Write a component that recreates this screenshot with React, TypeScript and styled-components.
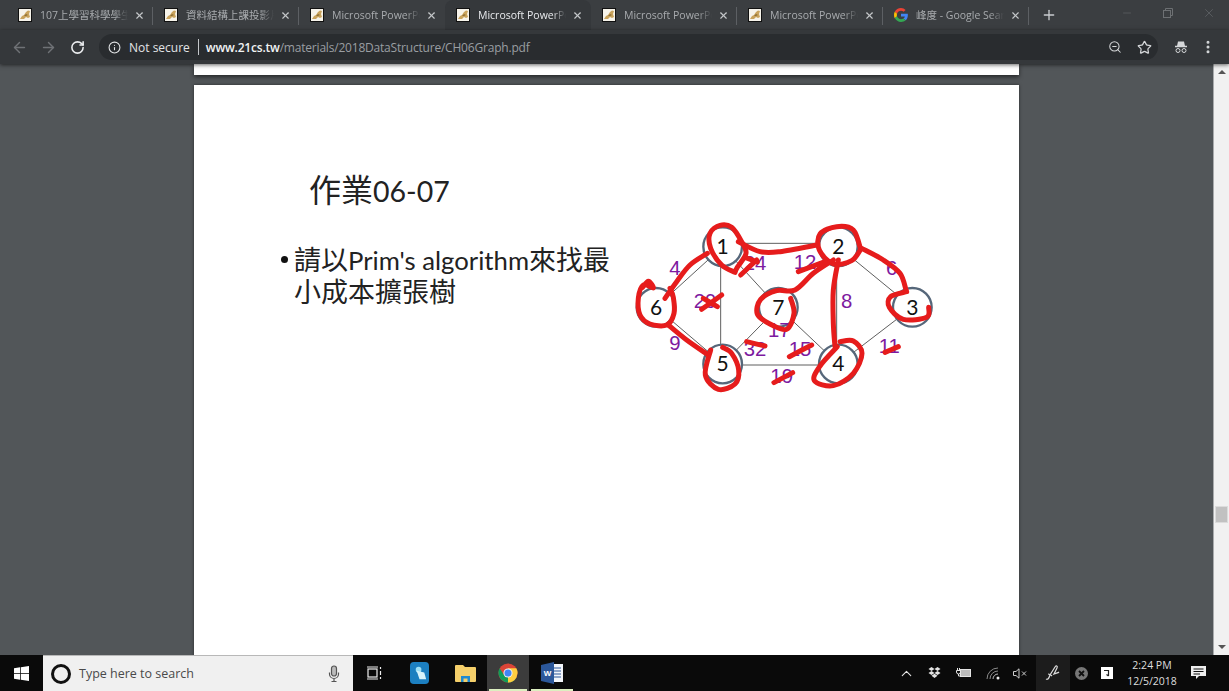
import * as React from "react";
import styled, { createGlobalStyle } from "styled-components";
import { ArrowLeft, ArrowRight, RotateCw, Info, ZoomOut, Star, MoreVertical, Minus, X, Plus, ChevronUp } from "lucide-react";

const uiFont = `"Open Sans", "Noto Sans", "Noto Sans CJK TC", sans-serif`;
const slideFont = `Lato, "Noto Sans CJK TC", sans-serif`;

const GlobalStyle = createGlobalStyle`
    html, body {
        margin: 0;
        padding: 0;
        background: #525659;
        overflow: hidden;
    }
`;

const Screen = styled.div`
    width: 1229px;
    height: 691px;
    display: flex;
    flex-direction: column;
    overflow: hidden;
    font-family: ${uiFont};
`;

/* ---- tab strip ---- */

const TabStrip = styled.div`
    height: 30px;
    flex: none;
    display: flex;
    align-items: stretch;
    padding-left: 7px;
    background: #3b3e41;
`;

const Tab = styled.div<{ $active?: boolean; $divider?: boolean }>`
    width: 146px;
    box-sizing: border-box;
    flex: none;
    display: flex;
    align-items: center;
    padding: 0 8px 0 11px;
    position: relative;
    border-radius: 8px 8px 0 0;
    background: ${(p) => (p.$active ? "#35383b" : "transparent")};
    color: ${(p) => (p.$active ? "#e8eaed" : "#a8abae")};
    &::after {
        content: "";
        display: ${(p) => (p.$divider ? "block" : "none")};
        position: absolute;
        right: 0;
        top: 7px;
        height: 18px;
        width: 1px;
        background: #5d6064;
    }
`;

const TabTitle = styled.span`
    margin-left: 8px;
    flex: 1;
    min-width: 0;
    overflow: hidden;
    white-space: nowrap;
    font-size: 10.5px;
    line-height: 30px;
    -webkit-mask-image: linear-gradient(to right, #000 84%, transparent 100%);
    mask-image: linear-gradient(to right, #000 84%, transparent 100%);
`;

const TabClose = styled(X)`
    flex: none;
    width: 11px;
    height: 11px;
    margin-left: 6px;
    color: #c4c7c9;
`;

const NewTab = styled(Plus)`
    width: 16px;
    height: 16px;
    margin: 7px 0 0 12px;
    color: #c9cccf;
`;

const WindowButtons = styled.div`
    margin-left: auto;
    display: flex;
    color: #6d7073;
`;

const WindowButton = styled.div`
    width: 41px;
    height: 26px;
    display: flex;
    align-items: center;
    justify-content: center;
`;

/* ---- toolbar ---- */

const Toolbar = styled.div`
    height: 34px;
    flex: none;
    display: flex;
    align-items: center;
    padding: 0 10px 0 10px;
    background: #35383b;
    box-shadow: 0 1px 4px rgba(0, 0, 0, 0.6);
    position: relative;
    z-index: 2;
`;

const NavButton = styled.div<{ $on?: boolean }>`
    width: 19px;
    height: 20px;
    margin-right: 10px;
    display: flex;
    align-items: center;
    justify-content: center;
    color: ${(p) => (p.$on ? "#eceef0" : "#6f7276")};
`;

const Omnibox = styled.div`
    width: 1059px;
    height: 26px;
    margin-left: 2px;
    box-sizing: border-box;
    flex: none;
    display: flex;
    align-items: center;
    padding: 0 6px 0 9px;
    border-radius: 13px;
    background: #292c2f;
    font-size: 12px;
    white-space: nowrap;
`;

const Secure = styled.span`
    margin-left: 8px;
    color: #e2e4e6;
`;

const OmniDivider = styled.span`
    width: 1px;
    height: 16px;
    margin: 0 7px 0 8px;
    background: #c4c7ca;
`;

const Host = styled.span`
    color: #f1f3f4;
    font-weight: 600;
    letter-spacing: -0.2px;
`;

const Path = styled.span`
    color: #9a9ea2;
    letter-spacing: -0.2px;
`;

const OmniIcons = styled.div`
    margin-left: auto;
    display: flex;
    align-items: center;
    gap: 15px;
    color: #d5d7d9;
`;

const ToolbarEnd = styled.div`
    margin-left: 16px;
    display: flex;
    align-items: center;
    gap: 12px;
    color: #d5d7d9;
`;

/* ---- pdf viewer ---- */

const Main = styled.div`
    flex: 1;
    min-height: 0;
    display: flex;
`;

const Viewer = styled.div`
    flex: 1;
    min-width: 0;
    overflow: hidden;
    padding-left: 194px;
    background: #525659;
`;

const PageTail = styled.div`
    width: 825px;
    height: 11px;
    margin-bottom: 10px;
    background: #fff;
    box-shadow: 0 2px 4px rgba(0, 0, 0, 0.55);
`;

const Page = styled.div`
    width: 825px;
    height: 600px;
    box-sizing: border-box;
    padding: 85px 0 0 84px;
    display: flex;
    background: #fff;
    box-shadow: 0 0 3px rgba(0, 0, 0, 0.5);
    color: #1a1a1a;
    font-family: ${slideFont};
`;

const TextColumn = styled.div`
    width: 342px;
    flex: none;
`;

const SlideTitle = styled.div`
    margin-left: 31px;
    height: 40px;
    font-size: 32px;
    line-height: 40px;
    color: #222;
    white-space: nowrap;
`;

const TitleLatin = styled.span`
    font-size: 28.5px;
`;

const Bullet = styled.div`
    position: relative;
    margin: 34px 0 0 16px;
    width: 325px;
    font-size: 27px;
    line-height: 31px;
    color: #222;
    &::before {
        content: "";
        position: absolute;
        left: -13px;
        top: 12px;
        width: 7px;
        height: 7px;
        border-radius: 50%;
        background: #111;
    }
`;

const BulletLatin = styled.span`
    font-size: 25.7px;
`;

const GraphBox = styled.svg`
    width: 330px;
    height: 195px;
    margin: 40px 0 0 0;
    flex: none;
`;

const Scrollbar = styled.div`
    width: 16px;
    flex: none;
    display: flex;
    flex-direction: column;
    align-items: center;
    background: #f1f1f1;
    border-left: 1px solid #a9abad;
    box-sizing: border-box;
`;

const ScrollArrow = styled.div<{ $down?: boolean }>`
    width: 0;
    height: 0;
    margin: 6px 0;
    border-left: 4px solid transparent;
    border-right: 4px solid transparent;
    border-bottom: ${(p) => (p.$down ? "0" : "4px solid #555")};
    border-top: ${(p) => (p.$down ? "4px solid #555" : "0")};
`;

const ScrollThumb = styled.div`
    width: 11px;
    height: 15px;
    margin-top: 427px;
    margin-bottom: auto;
    background: #c1c1c1;
    box-shadow: 0 0 0 1px #dcdcdc;
`;

/* ---- taskbar ---- */

const Taskbar = styled.div`
    height: 36px;
    flex: none;
    display: flex;
    align-items: stretch;
    background: #0a0a0a;
    position: relative;
    z-index: 3;
`;

const StartButton = styled.div`
    width: 43px;
    display: flex;
    align-items: center;
    justify-content: center;
`;

const SearchBox = styled.div`
    width: 310px;
    box-sizing: border-box;
    display: flex;
    align-items: center;
    padding: 0 13px 0 8px;
    background: #f0f0f0;
    border-top: 1px solid #b8b8b8;
    color: #4a4a4a;
    font-size: 12.5px;
`;

const Cortana = styled.div`
    width: 14px;
    height: 14px;
    border: 3px solid #111;
    border-radius: 50%;
    margin-right: 8px;
`;

const TaskIcon = styled.div<{ $width?: number; $active?: boolean; $open?: boolean }>`
    width: ${(p) => p.$width || 44}px;
    flex: none;
    display: flex;
    align-items: center;
    justify-content: center;
    position: relative;
    background: ${(p) => (p.$active ? "#3c3c3c" : "transparent")};
    &::after {
        content: "";
        display: ${(p) => (p.$open ? "block" : "none")};
        position: absolute;
        left: 2px;
        right: 2px;
        bottom: 0;
        height: 2px;
        background: #dcefc0;
    }
`;

const Tray = styled.div`
    margin-left: auto;
    display: flex;
    align-items: stretch;
    color: #e4e4e4;
`;

const TrayIcon = styled.div<{ $width: number; $raised?: boolean; $gap?: number }>`
    width: ${(p) => p.$width}px;
    margin-left: ${(p) => p.$gap || 0}px;
    flex: none;
    display: flex;
    align-items: center;
    justify-content: center;
    background: ${(p) => (p.$raised ? "#1c1c1c" : "transparent")};
`;

const Clock = styled.div`
    width: 60px;
    flex: none;
    display: flex;
    flex-direction: column;
    align-items: center;
    justify-content: center;
    font-size: 10.5px;
    line-height: 16px;
    color: #dedede;
    white-space: nowrap;
`;

function Favicon(): JSX.Element {
    return (
        <svg width="14" height="14" viewBox="0 0 14 14" style={{ flex: "none" }}>
            <rect x="0.5" y="0.5" width="13" height="13" fill="#f6f3ea" stroke="#111" />
            <path d="M2 11 L4 8 L6 7 L8 4 L10 2.500 L12 3 L11 6 L12 9 L10 10 L8 9 L6 11 Z" fill="#c9a35c" />
            <path d="M6 8 L8 6 L10 7 L8 8 Z" fill="#8e6f35" />
        </svg>
    );
}

function GoogleG({ size = 14 }: { size?: number }): JSX.Element {
    return (
        <svg width={size} height={size} viewBox="0 0 48 48" style={{ flex: "none" }}>
            <path fill="#EA4335" d="M24 9.5c3.9 0 6.9 1.6 9.1 3.7l6.7-6.7C35.7 2.7 30.3 0 24 0 14.6 0 6.5 5.4 2.6 13.2l7.9 6.1C12.4 13.7 17.7 9.5 24 9.5z" />
            <path fill="#4285F4" d="M47.5 24.5c0-1.6-.1-3.1-.4-4.5H24v9h13.2c-.6 3-2.3 5.5-4.9 7.2l7.6 5.9c4.4-4.1 7.6-10.1 7.6-17.6z" />
            <path fill="#FBBC05" d="M10.5 28.7c-.5-1.4-.8-3-.8-4.7s.3-3.200.8-4.700l-7.900-6.100C.9 16.500 0 20.100 0 24s.9 7.500 2.600 10.800l7.900-6.100z" />
            <path fill="#34A853" d="M24 48c6.500 0 11.900-2.100 15.900-5.900l-7.600-5.900c-2.100 1.400-4.900 2.300-8.300 2.300-6.300 0-11.600-4.200-13.500-10l-7.900 6.100C6.500 42.600 14.600 48 24 48z" />
        </svg>
    );
}

function ChromeLogo(): JSX.Element {
    return (
        <svg width="20" height="20" viewBox="0 0 48 48">
            <circle cx="24" cy="24" r="23" fill="#db4437" />
            <path d="M24 24 L44 35.500 A23 23 0 0 1 13 44 Z" fill="#0f9d58" />
            <path d="M24 24 L24 47 A23 23 0 0 0 44 35.500 L47 24 A23 23 0 0 0 44 12.500 L24 12.500 Z" fill="#ffcd40" />
            <path d="M24 24 L13 44 A23 23 0 0 1 4 12.500 L14 28 Z" fill="#0f9d58" />
            <circle cx="24" cy="24" r="11" fill="#f1f1f1" />
            <circle cx="24" cy="24" r="8.500" fill="#4285f4" />
        </svg>
    );
}

/* hand-drawn line passing through every point (catmull-rom) */
function smooth(points: number[][]): string {
    let d = `M${points[0][0]} ${points[0][1]}`;
    for (let i = 0; i < points.length - 1; i++) {
        const p0 = points[i - 1] || points[i];
        const p1 = points[i];
        const p2 = points[i + 1];
        const p3 = points[i + 2] || p2;
        const c1x = p1[0] + (p2[0] - p0[0]) / 6;
        const c1y = p1[1] + (p2[1] - p0[1]) / 6;
        const c2x = p2[0] - (p3[0] - p1[0]) / 6;
        const c2y = p2[1] - (p3[1] - p1[1]) / 6;
        d += ` C${c1x} ${c1y} ${c2x} ${c2y} ${p2[0]} ${p2[1]}`;
    }
    return d;
}

const nodes = [
    { n: "1", x: 308, y: 110 },
    { n: "2", x: 655, y: 110 },
    { n: "3", x: 877, y: 292 },
    { n: "4", x: 655, y: 462 },
    { n: "5", x: 308, y: 462 },
    { n: "6", x: 108, y: 292 },
    { n: "7", x: 475, y: 292 },
];

const edges = [
    [308, 100, 655, 100],
    [302, 110, 302, 462],
    [308, 110, 108, 292],
    [308, 110, 475, 292],
    [655, 110, 877, 292],
    [650, 110, 650, 462],
    [655, 110, 475, 292],
    [877, 292, 655, 462],
    [308, 465, 655, 465],
    [475, 292, 655, 462],
    [308, 462, 108, 292],
    [308, 462, 475, 292],
];

const weights = [
    { t: "4", x: 165, y: 172 },
    { t: "24", x: 405, y: 158 },
    { t: "12", x: 555, y: 155 },
    { t: "6", x: 815, y: 172 },
    { t: "29", x: 255, y: 272 },
    { t: "8", x: 680, y: 272 },
    { t: "17", x: 478, y: 360 },
    { t: "9", x: 165, y: 398 },
    { t: "32", x: 405, y: 415 },
    { t: "15", x: 540, y: 415 },
    { t: "11", x: 808, y: 408 },
    { t: "19", x: 485, y: 497 },
];

const redLines = [
    [[355, 95], [420, 125], [480, 125], [590, 105]],
    [[345, 187], [305, 165], [272, 115], [270, 70], [300, 46], [335, 52], [365, 95], [378, 130], [352, 172], [345, 187]],
    [[362, 195], [410, 150]],
    [[375, 142], [412, 156]],
    [[262, 130], [210, 165], [170, 215], [135, 265]],
    [[68, 232], [85, 214], [100, 234], [70, 225], [55, 265], [60, 315], [90, 342], [140, 345], [162, 310], [160, 262], [150, 235]],
    [[145, 345], [200, 390], [265, 435]],
    [[272, 420], [256, 495], [295, 538], [345, 522], [356, 480], [335, 430], [308, 412]],
    [[722, 118], [700, 60], [650, 50], [600, 72], [598, 120], [640, 162], [695, 152], [722, 118]],
    [[725, 115], [790, 150], [840, 190], [858, 240]],
    [[860, 245], [812, 260], [808, 292], [850, 328], [920, 322], [926, 292]],
    [[640, 150], [580, 190], [525, 240], [470, 242], [422, 268], [412, 312], [450, 342], [500, 358], [522, 310], [512, 265]],
    [[535, 185], [615, 155]],
    [[655, 150], [640, 240], [640, 340], [645, 410]],
    [[652, 410], [600, 468], [583, 512], [640, 527], [700, 490], [726, 430], [700, 393], [660, 395]],
    [[245, 298], [305, 255]],
    [[250, 265], [292, 290]],
    [[380, 395], [435, 408]],
    [[508, 440], [575, 405]],
    [[795, 427], [835, 410]],
    [[462, 518], [518, 488]],
];

function Graph(): JSX.Element {
    return (
        <GraphBox viewBox="0 0 990 585">
            {edges.map((e, i) => (
                <line key={i} x1={e[0]} y1={e[1]} x2={e[2]} y2={e[3]} stroke="#5f5f5f" strokeWidth="3" />
            ))}
            {nodes.map((node) => (
                <g key={node.n}>
                    <circle cx={node.x} cy={node.y} r="58" fill="#fff" stroke="#56677a" strokeWidth="7" />
                    <text x={node.x} y={node.y + 22} textAnchor="middle" fontSize="63" fontFamily="Lato, sans-serif" fill="#111">{node.n}</text>
                </g>
            ))}
            {weights.map((w) => (
                <text key={w.t} x={w.x} y={w.y + 22} textAnchor="middle" fontSize="61" fontFamily="Liberation Sans, sans-serif" fill="#7d1aa0">{w.t}</text>
            ))}
            {redLines.map((pts, i) => (
                <path key={i} d={smooth(pts)} fill="none" stroke="#e61c1c" strokeWidth="15" strokeLinecap="round" strokeLinejoin="round" />
            ))}
        </GraphBox>
    );
}

const tabs = [
    { title: "107上學習科學學生", divider: true },
    { title: "資料結構上課投影片", divider: true },
    { title: "Microsoft PowerPoint" },
    { title: "Microsoft PowerPoint", active: true },
    { title: "Microsoft PowerPoint", divider: true },
    { title: "Microsoft PowerPoint", divider: true },
    { title: "峰度 - Google Search", divider: true, google: true },
];

export default function App(): JSX.Element {
    return (
        <Screen>
            <GlobalStyle />
            <TabStrip>
                {tabs.map((tab, i) => (
                    <Tab key={i} $active={tab.active} $divider={tab.divider}>
                        {tab.google ? <GoogleG /> : <Favicon />}
                        <TabTitle>{tab.title}</TabTitle>
                        <TabClose strokeWidth={2.5} />
                    </Tab>
                ))}
                <NewTab strokeWidth={2} />
                <WindowButtons>
                    <WindowButton><Minus size={12} strokeWidth={1} /></WindowButton>
                    <WindowButton>
                        <svg width="10" height="10" viewBox="0 0 10 10" fill="none" stroke="currentColor">
                            <rect x="0.5" y="2.500" width="7" height="7" />
                            <path d="M2.500 2.500V0.500H9.500V7.500H7.500" />
                        </svg>
                    </WindowButton>
                    <WindowButton><X size={14} strokeWidth={1} /></WindowButton>
                </WindowButtons>
            </TabStrip>
            <Toolbar>
                <NavButton><ArrowLeft size={17} strokeWidth={2} /></NavButton>
                <NavButton><ArrowRight size={17} strokeWidth={2} /></NavButton>
                <NavButton $on><RotateCw size={15} strokeWidth={2.5} /></NavButton>
                <Omnibox>
                    <Info size={13} color="#e2e4e6" strokeWidth={2} />
                    <Secure>Not secure</Secure>
                    <OmniDivider />
                    <Host>www.21cs.tw</Host>
                    <Path>/materials/2018DataStructure/CH06Graph.pdf</Path>
                    <OmniIcons>
                        <ZoomOut size={14} strokeWidth={1.75} />
                        <Star size={15} strokeWidth={2} />
                    </OmniIcons>
                </Omnibox>
                <ToolbarEnd>
                    <svg width="14" height="14" viewBox="0 0 14 14" fill="none" stroke="currentColor">
                        <path d="M4 1.500H10L11 6H3Z" fill="currentColor" stroke="none" />
                        <path d="M1 6.500H13" strokeWidth="1.500" />
                        <circle cx="4" cy="10.500" r="2" />
                        <circle cx="10" cy="10.500" r="2" />
                    </svg>
                    <MoreVertical size={16} strokeWidth={2.5} />
                </ToolbarEnd>
            </Toolbar>
            <Main>
                <Viewer>
                    <PageTail />
                    <Page>
                        <TextColumn>
                            <SlideTitle>作業<TitleLatin>06-07</TitleLatin></SlideTitle>
                            <Bullet>請以<BulletLatin>Prim's algorithm</BulletLatin>來找最小成本擴張樹</Bullet>
                        </TextColumn>
                        <Graph />
                    </Page>
                </Viewer>
                <Scrollbar>
                    <ScrollArrow />
                    <ScrollThumb />
                    <ScrollArrow $down />
                </Scrollbar>
            </Main>
            <Taskbar>
                <StartButton>
                    <svg width="15" height="15" viewBox="0 0 16 16" fill="#fff">
                        <path d="M0 2.300 6.500 1.400V7.600H0ZM7.300 1.300 16 0V7.600H7.300ZM0 8.400H6.500V14.600L0 13.700ZM7.300 8.400H16V16L7.300 14.700Z" />
                    </svg>
                </StartButton>
                <SearchBox>
                    <Cortana />
                    Type here to search
                    <svg width="12" height="18" viewBox="0 0 12 18" fill="none" stroke="#555" strokeWidth="1.200" style={{ marginLeft: "auto" }}>
                        <rect x="3.500" y="1" width="5" height="10" rx="2.500" fill="#bbb" />
                        <path d="M1.500 7.500V9a4.500 4.500 0 0 0 9 0V7.500M6 13.500V16M3.500 16.500H8.500" />
                    </svg>
                </SearchBox>
                <TaskIcon $width={43}>
                    <svg width="16" height="14" viewBox="0 0 16 14" fill="none" stroke="#eee" strokeWidth="1.200">
                        <rect x="1" y="3" width="9" height="8" />
                        <path d="M0 1H11M0 13H11M13.500 1V3M13.500 5V9M13.500 11V13" />
                    </svg>
                </TaskIcon>
                <TaskIcon $width={47}>
                    <svg width="19" height="22" viewBox="0 0 20 23">
                        <rect width="20" height="23" rx="4" fill="#1c7fc0" />
                        <circle cx="9" cy="8" r="3" fill="#9fe0f5" />
                        <path d="M7 9 L10 18 H17 L15 11 Z" fill="#d8f3fb" />
                    </svg>
                </TaskIcon>
                <TaskIcon $width={44}>
                    <svg width="21" height="18" viewBox="0 0 21 18">
                        <path d="M0 2a1 1 0 0 1 1-1H8L10 3H20a1 1 0 0 1 1 1V17a1 1 0 0 1-1 1H1a1 1 0 0 1-1-1Z" fill="#f4cf6a" />
                        <path d="M6 18V12H15V18H12.500V14.500H8.500V18Z" fill="#1f8ad0" />
                    </svg>
                </TaskIcon>
                <TaskIcon $width={42} $active $open><ChromeLogo /></TaskIcon>
                <TaskIcon $width={46} $open>
                    <svg width="22" height="22" viewBox="0 0 22 22">
                        <rect x="8" y="2" width="14" height="18" fill="#f2f5fa" />
                        <path d="M11 6H20M11 9H20M11 12H20M11 15H20" stroke="#2b579a" strokeWidth="1.200" />
                        <path d="M0 3 13 0V22L0 19Z" fill="#2b579a" />
                        <text x="6.500" y="14" fontSize="8" fontWeight="700" textAnchor="middle" fill="#fff" fontFamily="Liberation Sans, sans-serif">W</text>
                    </svg>
                </TaskIcon>
                <Tray>
                    <TrayIcon $width={28}><ChevronUp size={17} strokeWidth={1.500} /></TrayIcon>
                    <TrayIcon $width={28}>
                        <svg width="13" height="12" viewBox="0 0 13 12" fill="currentColor">
                            <path d="M3.500 0 6.500 2 3.500 4 .5 2ZM9.500 0 12.500 2 9.500 4 6.500 2ZM3.500 4 6.500 6 3.500 8 .5 6ZM9.500 4 12.500 6 9.500 8 6.500 6ZM3.500 8.800 6.500 6.800 9.500 8.800 6.500 11Z" />
                        </svg>
                    </TrayIcon>
                    <TrayIcon $width={30}>
                        <svg width="15" height="12" viewBox="0 0 15 12" fill="none" stroke="currentColor">
                            <rect x="4.500" y="2.500" width="10" height="7" fill="#bbb" />
                            <path d="M1.500 1V3.500M3.500 1V3.500M.5 3.500H4.500V5a2 2 0 0 1-4 0ZM2.500 7V9H4.500" />
                        </svg>
                    </TrayIcon>
                    <TrayIcon $width={30}>
                        <svg width="14" height="13" viewBox="0 0 14 13" fill="none" stroke="#8a8a8a">
                            <path d="M1 12A11 11 0 0 1 12 1" />
                            <path d="M4 12A8 8 0 0 1 12 4" />
                            <path d="M7 12A5 5 0 0 1 12 7" stroke="#bbb" />
                            <circle cx="12" cy="11" r="1.500" fill="#eee" stroke="none" />
                        </svg>
                    </TrayIcon>
                    <TrayIcon $width={24}>
                        <svg width="14" height="11" viewBox="0 0 14 11" fill="none" stroke="#ccc">
                            <path d="M.5 3.500H3L6 .8V10.200L3 7.500H.5Z" />
                            <path d="M9 3.500 13 7.500M13 3.500 9 7.500" />
                        </svg>
                    </TrayIcon>
                    <TrayIcon $width={34} $gap={4} $raised>
                        <svg width="16" height="16" viewBox="0 0 16 16" fill="none" stroke="#ddd" strokeWidth="1.200">
                            <path d="M1 14c2 1 3-1 4-4l5-8c1-2 3-1 2 1l-3 6c2-1 4-1 5-2" />
                            <path d="M3 9c1 0 3 1 4 2" />
                        </svg>
                    </TrayIcon>
                    <TrayIcon $width={22}>
                        <svg width="13" height="13" viewBox="0 0 13 13">
                            <circle cx="6.500" cy="6.500" r="6.500" fill="#777" />
                            <path d="M4 4 9 9M9 4 4 9" stroke="#111" strokeWidth="1.800" />
                        </svg>
                    </TrayIcon>
                    <TrayIcon $width={30}>
                        <svg width="12" height="12" viewBox="0 0 12 12">
                            <rect width="12" height="12" fill="#fff" />
                            <path d="M3 3.500H7.500V9M7.500 9 5.500 7.500" fill="none" stroke="#222" strokeWidth="1.200" />
                        </svg>
                    </TrayIcon>
                    <Clock>
                        <span>2:24 PM</span>
                        <span>12/5/2018</span>
                    </Clock>
                    <TrayIcon $width={34}>
                        <svg width="16" height="15" viewBox="0 0 16 15" fill="none">
                            <path d="M0 0H15V10H8L5 13V10H0Z" fill="#eee" />
                            <path d="M2.500 3H12.500M2.500 5.500H12.500M2.500 8H9" stroke="#111" />
                        </svg>
                    </TrayIcon>
                    <TrayIcon $width={13} />
                </Tray>
            </Taskbar>
        </Screen>
    );
}
